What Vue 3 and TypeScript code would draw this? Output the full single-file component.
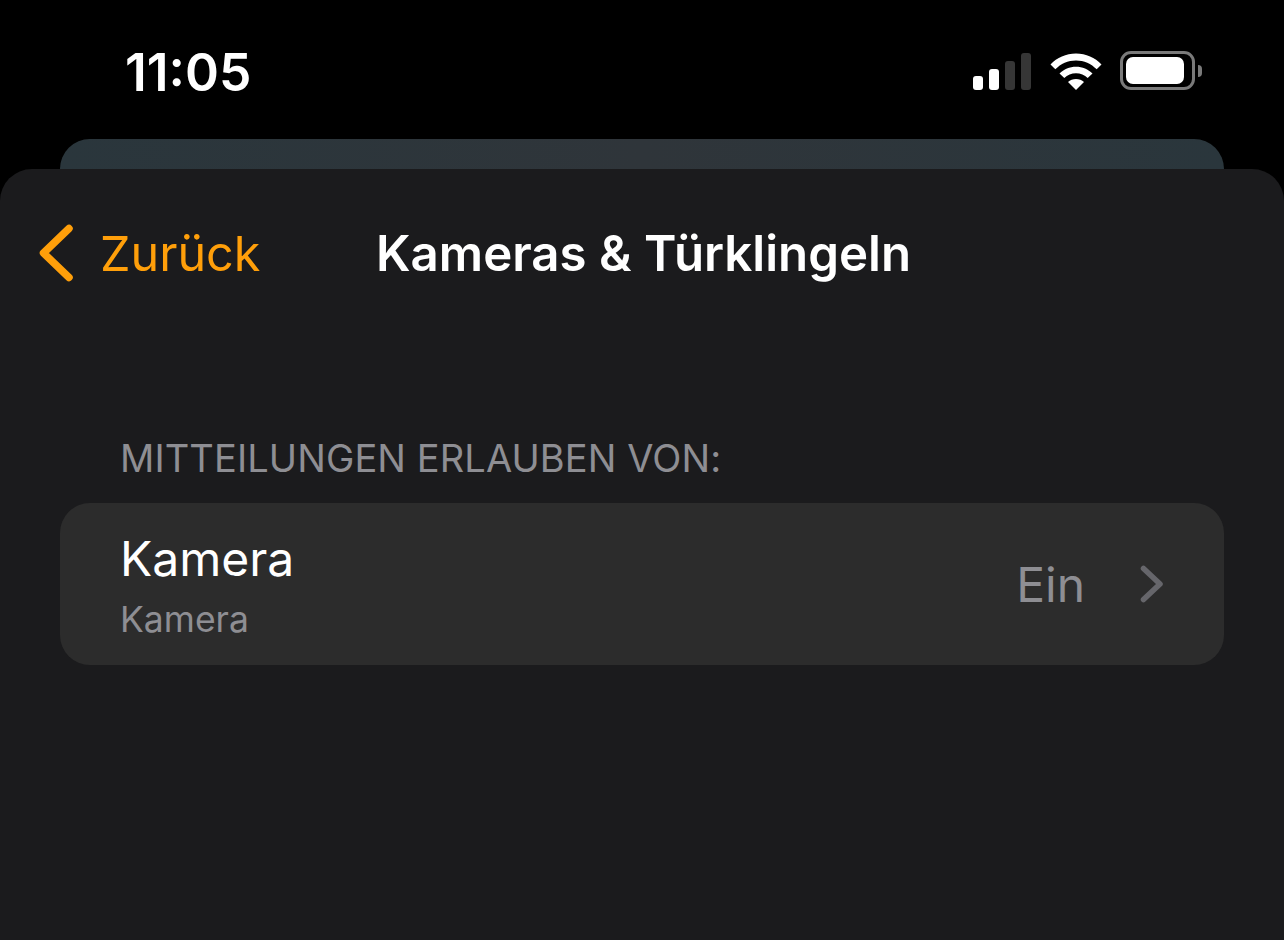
<script setup lang="ts">
const signalBars = [
  { height: 14, on: true },
  { height: 21, on: true },
  { height: 29, on: false },
  { height: 37, on: false },
]
</script>

<template>
  <div class="screen">
    <header class="status-bar">
      <span class="time">11:05</span>
      <div class="status-icons">
        <div class="signal">
          <span
            v-for="bar in signalBars"
            :key="bar.height"
            class="bar"
            :class="{ on: bar.on }"
            :style="{ height: bar.height + 'px' }"
          ></span>
        </div>
        <svg class="wifi" width="52" height="38" viewBox="0 0 52 38">
          <path d="M0.500 12.500C7 5.500 16 1.500 26 1.500s19 4 25.500 11l-4.800 4.800C41.200 11.600 34 8.400 26 8.400S10.800 11.600 5.300 17.300Z" fill="#fff" />
          <path d="M9.500 21.500C13.800 17.200 19.600 14.700 26 14.700S38.200 17.200 42.500 21.500l-4.800 4.500C34.600 23 30.500 21.200 26 21.200s-8.600 1.800-11.700 4.800Z" fill="#fff" />
          <path d="M18 30C20.100 28 22.900 26.900 26 26.900s5.900 1.100 8 3.100L26 38Z" fill="#fff" />
        </svg>
        <div class="battery">
          <div class="battery-body"><div class="battery-fill"></div></div>
          <div class="battery-cap"></div>
        </div>
      </div>
    </header>

    <div class="peek"></div>

    <main class="sheet">
      <nav class="nav">
        <div class="back">
          <svg width="34" height="58" viewBox="0 0 34 58">
            <path d="M30 4.500 4.500 29 30 53.500" fill="none" stroke="#ff9f0a" stroke-width="7.500" stroke-linecap="round" stroke-linejoin="round" />
          </svg>
          <span>Zurück</span>
        </div>
        <h1>Kameras &amp; Türklingeln</h1>
        <div></div>
      </nav>

      <section class="group">
        <h2>MITTEILUNGEN ERLAUBEN VON:</h2>
        <div class="card">
          <div class="card-text">
            <div class="card-title">Kamera</div>
            <div class="card-sub">Kamera</div>
          </div>
          <div class="card-value">
            <span>Ein</span>
            <svg width="24" height="38" viewBox="0 0 24 38">
              <path d="M3.500 3.500 20 19 3.500 34.500" fill="none" stroke="#66666b" stroke-width="5.500" stroke-linecap="round" stroke-linejoin="round" />
            </svg>
          </div>
        </div>
      </section>
    </main>
  </div>
</template>

<style>
html,
body {
  margin: 0;
  background: #000;
}
</style>

<style scoped>
.screen {
  width: 1284px;
  height: 940px;
  overflow: hidden;
  display: flex;
  flex-direction: column;
  background: #000;
  font-family: Inter, "Liberation Sans", sans-serif;
  color: #fff;
}

.status-bar {
  height: 139px;
  flex: none;
  box-sizing: border-box;
  padding: 0 82px 0 125px;
  display: flex;
  justify-content: space-between;
  align-items: flex-start;
}

.time {
  margin-top: 42px;
  font-size: 51.500px;
  line-height: 60px;
  font-weight: 600;
}

.status-icons {
  margin-top: 51px;
  display: flex;
  align-items: center;
}

.signal {
  display: flex;
  align-items: flex-end;
  gap: 6px;
  height: 38px;
}

.bar {
  width: 10px;
  border-radius: 3px;
  background: #363636;
}

.bar.on {
  background: #fff;
}

.wifi {
  margin: 0 18px 0 19px;
}

.battery {
  display: flex;
  align-items: center;
  gap: 3px;
}

.battery-body {
  box-sizing: border-box;
  width: 75px;
  height: 39px;
  padding: 3px;
  border: 3px solid #7a7a7a;
  border-radius: 11px;
}

.battery-fill {
  width: 58px;
  height: 100%;
  border-radius: 7px;
  background: #fff;
}

.battery-cap {
  width: 4px;
  height: 12px;
  border-radius: 0 6px 6px 0;
  background: #7a7a7a;
}

.peek {
  height: 30px;
  flex: none;
  margin: 0 60px;
  border-radius: 30px 30px 0 0;
  background: linear-gradient(90deg, #2a363c, #2f353a 50%, #2a363c);
}

.sheet {
  flex: 1;
  background: #1b1b1d;
  border-radius: 32px 32px 0 0;
  padding-top: 54px;
}

.nav {
  display: grid;
  grid-template-columns: 1fr auto 1fr;
  align-items: center;
  height: 60px;
  padding: 0 36px 0 39px;
}

.back {
  display: flex;
  align-items: center;
  gap: 27px;
  color: #ff9f0a;
  font-size: 48.500px;
}

.nav h1 {
  margin: 0;
  font-size: 49.200px;
  font-weight: 600;
}

.group {
  margin: 0 60px;
  padding-top: 150px;
}

.group h2 {
  margin: 0 0 20px 60px;
  font-size: 38px;
  line-height: 50px;
  font-weight: 400;
  letter-spacing: 0.1px;
  color: #8e8e93;
}

.card {
  box-sizing: border-box;
  height: 162px;
  padding: 0 60px;
  border-radius: 30px;
  background: #2c2c2c;
  display: flex;
  align-items: center;
  justify-content: space-between;
}

.card-text {
  margin-top: 3px;
}

.card-title {
  font-size: 48px;
  line-height: 58px;
}

.card-sub {
  margin-top: 11px;
  font-size: 35.500px;
  line-height: 42px;
  color: #8e8e93;
}

.card-value {
  display: flex;
  align-items: center;
  gap: 55px;
  font-size: 48px;
  color: #8e8e93;
}
</style>
